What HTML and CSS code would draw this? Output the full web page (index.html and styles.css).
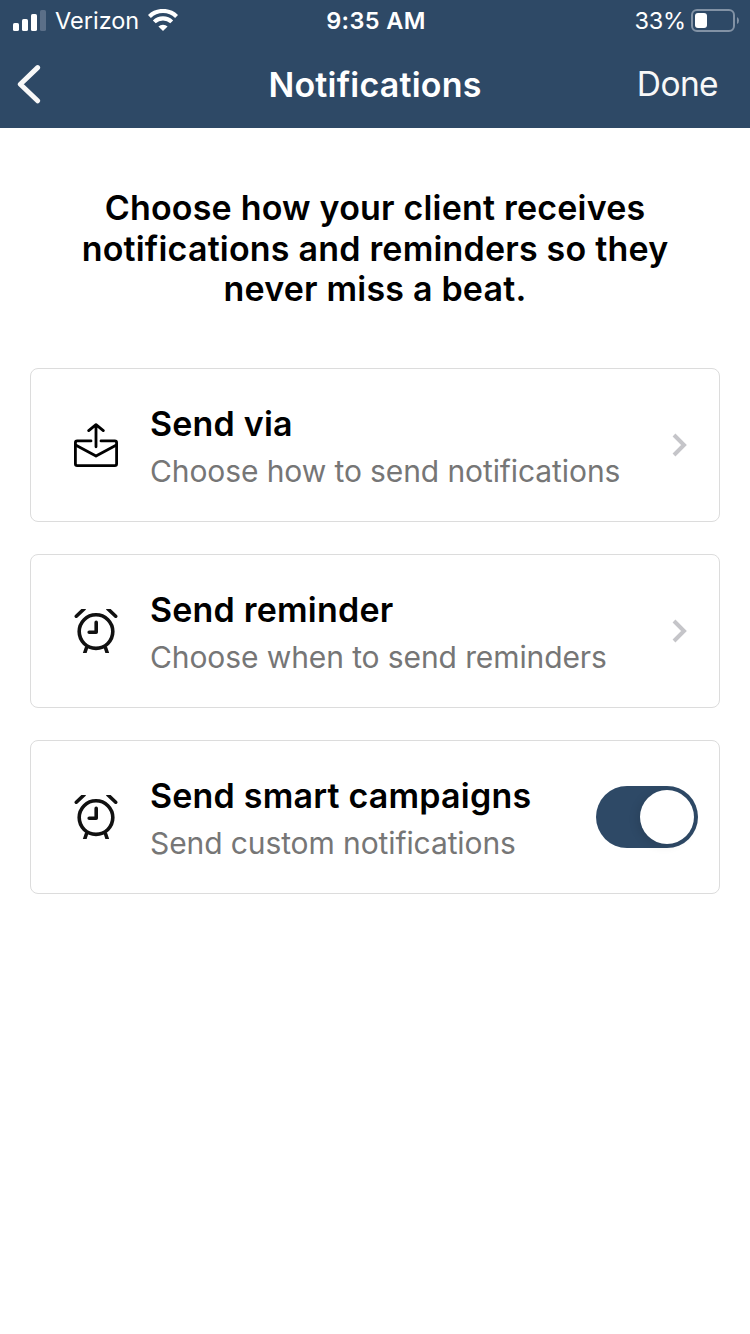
FILE: index.html
```html
<!DOCTYPE html>
<html lang="en">
<head>
    <meta charset="UTF-8">
    <meta name="viewport" content="width=device-width, initial-scale=1.0">
    <title>Notifications</title>
    <link rel="stylesheet" href="styles.css">
</head>
<body>
    <header class="header">
        <div class="status-bar">
            <div class="carrier">
                <svg class="signal" width="33" height="21" viewBox="0 0 33 21">
                    <rect x="0" y="13" width="6" height="8" rx="1.6" fill="#fff"/>
                    <rect x="9" y="9" width="6" height="12" rx="1.6" fill="#fff"/>
                    <rect x="18" y="4" width="6" height="17" rx="1.6" fill="#fff"/>
                    <rect x="27" y="0" width="6" height="21" rx="1.6" fill="#5b6f88"/>
                </svg>
                <span class="carrier-name">Verizon</span>
                <svg class="wifi" width="30" height="22" viewBox="0 0 30 22">
                    <path d="M1.4 7.5 A19.5 19.5 0 0 1 28.6 7.5" fill="none" stroke="#fff" stroke-width="4.2"/>
                    <path d="M6.3 12.9 A12.5 12.5 0 0 1 23.7 12.9" fill="none" stroke="#fff" stroke-width="4.1"/>
                    <path d="M15 22 L10.4 17.6 A6.5 6.5 0 0 1 19.6 17.6 Z" fill="#fff"/>
                </svg>
            </div>
            <span class="time">9:35 AM</span>
            <div class="power">
                <span class="percent">33%</span>
                <svg class="battery" width="48" height="23" viewBox="0 0 48 23">
                    <rect x="1" y="1" width="42" height="21" rx="5" fill="none" stroke="#8292a5" stroke-width="2"/>
                    <rect x="4" y="4" width="12" height="15" rx="3" fill="#fff"/>
                    <path d="M46 8 Q48 9 48 11.5 Q48 14 46 15 Z" fill="#8292a5"/>
                </svg>
            </div>
        </div>
        <div class="nav-bar">
            <svg class="back" width="24" height="40" viewBox="0 0 24 40">
                <path d="M20.6 3.6 L3.3 20.3 L20.6 36.8" fill="none" stroke="#f8f8f8" stroke-width="5" stroke-linecap="round" stroke-linejoin="round"/>
            </svg>
            <h1 class="title">Notifications</h1>
            <span class="done">Done</span>
        </div>
    </header>

    <main class="content">
        <h2 class="intro">Choose how your client receives<br>notifications and reminders so they<br>never miss a beat.</h2>

        <div class="card">
            <svg class="card-icon" width="44" height="44" viewBox="0 0 44 44">
                <g fill="none" stroke="#000" stroke-width="2.8" stroke-linecap="round" stroke-linejoin="round">
                    <path d="M17 17.9 H3.2 Q1.4 17.9 1.4 19.7 V40.8 Q1.4 42.6 3.2 42.6 H40.8 Q42.6 42.6 42.6 40.8 V19.7 Q42.6 17.9 40.8 17.9 H27"/>
                    <path d="M2 22.3 L22 33 L42 22.3"/>
                    <path d="M22 23.8 V1.8 M14.7 7.6 L22 1.6 L29.3 7.6"/>
                </g>
            </svg>
            <div class="card-text">
                <h3 class="card-title">Send via</h3>
                <p class="card-sub">Choose how to send notifications</p>
            </div>
            <svg class="chevron" width="15" height="24" viewBox="0 0 15 24">
                <path d="M2 2 L12 12 L2 22" fill="none" stroke="#c5c5c9" stroke-width="4"/>
            </svg>
        </div>

        <div class="card">
            <svg class="card-icon" width="44" height="44" viewBox="0 0 44 44">
                <g fill="none" stroke="#111" stroke-width="3.6" stroke-linecap="round" stroke-linejoin="round">
                    <circle cx="22" cy="22.6" r="16.8"/>
                    <path d="M22.2 13.4 V23.3 H15.2"/>
                    <path d="M2.3 7.2 L10 0 M41.7 7.2 L34 0"/>
                    <path d="M12.4 39 L10.4 45 M31.6 39 L33.6 45"/>
                </g>
            </svg>
            <div class="card-text">
                <h3 class="card-title">Send reminder</h3>
                <p class="card-sub">Choose when to send reminders</p>
            </div>
            <svg class="chevron" width="15" height="24" viewBox="0 0 15 24">
                <path d="M2 2 L12 12 L2 22" fill="none" stroke="#c5c5c9" stroke-width="4"/>
            </svg>
        </div>

        <div class="card">
            <svg class="card-icon" width="44" height="44" viewBox="0 0 44 44">
                <g fill="none" stroke="#111" stroke-width="3.6" stroke-linecap="round" stroke-linejoin="round">
                    <circle cx="22" cy="22.6" r="16.8"/>
                    <path d="M22.2 13.4 V23.3 H15.2"/>
                    <path d="M2.3 7.2 L10 0 M41.7 7.2 L34 0"/>
                    <path d="M12.4 39 L10.4 45 M31.6 39 L33.6 45"/>
                </g>
            </svg>
            <div class="card-text">
                <h3 class="card-title">Send smart campaigns</h3>
                <p class="card-sub">Send custom notifications</p>
            </div>
            <div class="toggle"><div class="knob"></div></div>
        </div>
    </main>
</body>
</html>
```
FILE: styles.css
```css
* {
    box-sizing: border-box;
    margin: 0;
    padding: 0;
}

body {
    font-family: Inter, "Liberation Sans", sans-serif;
    background-color: #fff;
    color: #000;
    min-height: 1334px;
}

svg {
    display: block;
    flex: none;
}

/* header */
.header {
    height: 128px;
    background-color: #2e4966;
    color: #fff;
}

.status-bar {
    display: grid;
    grid-template-columns: 1fr auto 1fr;
    align-items: center;
    height: 40px;
    padding: 0 11px 0 13px;
    font-size: 23.5px;
    line-height: 38px;
}

.carrier-name,
.time,
.percent {
    padding-top: 2px;
}

.carrier {
    display: flex;
    align-items: center;
}

.carrier-name {
    margin-left: 9px;
}

.wifi {
    margin-left: 9px;
}

.time {
    font-weight: 600;
    letter-spacing: 0.4px;
}

.power {
    display: flex;
    align-items: center;
    justify-content: flex-end;
}

.percent {
    letter-spacing: -0.2px;
}

.battery {
    margin-left: 5px;
}

.nav-bar {
    display: grid;
    grid-template-columns: 1fr auto 1fr;
    align-items: center;
    height: 88px;
    padding: 0 17px;
}

.title {
    font-size: 34px;
    font-weight: 600;
    letter-spacing: 0.2px;
}

.done {
    justify-self: end;
    margin-right: 15px;
    color: #f8f8f8;
    font-size: 33.5px;
    letter-spacing: -0.6px;
}

/* content */
.content {
    padding: 60px 30px 0;
}

.intro {
    margin-bottom: 58px;
    text-align: center;
    font-size: 34px;
    font-weight: 600;
    line-height: 40.6px;
    letter-spacing: 0.2px;
}

.card {
    display: flex;
    align-items: center;
    height: 154px;
    margin-bottom: 32px;
    padding: 0 21px 0 43px;
    border: 1px solid #dcdcdc;
    border-radius: 8px;
}

.card-text {
    flex: 1;
    margin-left: 32px;
    padding-top: 4px;
    white-space: nowrap;
}

.card-title {
    font-size: 34px;
    font-weight: 600;
    line-height: 48px;
    letter-spacing: 0.2px;
}

.card-sub {
    color: #767676;
    font-size: 30px;
    line-height: 46px;
    letter-spacing: -0.1px;
}

.chevron {
    margin-right: 11px;
}

.toggle {
    display: flex;
    justify-content: flex-end;
    width: 102px;
    height: 62px;
    padding: 4px;
    border-radius: 31px;
    background-color: #2e4966;
}

.knob {
    width: 54px;
    height: 54px;
    border-radius: 50%;
    background-color: #fff;
    box-shadow: -3px 2px 10px rgba(0, 0, 0, 0.1);
}
```
